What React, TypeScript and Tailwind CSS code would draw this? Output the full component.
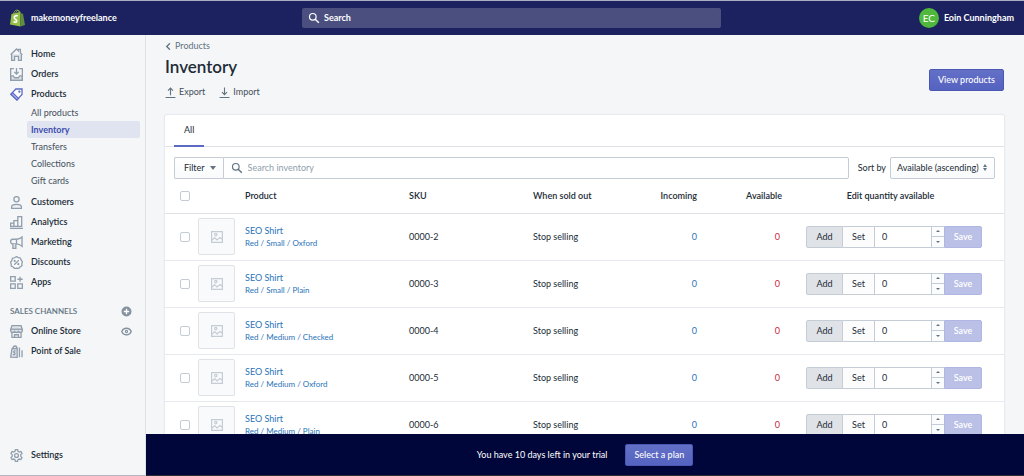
import { useState, type ReactNode } from 'react';
import clsx from 'clsx';

type IconProps = { children: ReactNode; className?: string };

function Icon({ children, className }: IconProps) {
  return (
    <svg
      viewBox="0 0 20 20"
      fill="none"
      stroke="currentColor"
      strokeWidth="2"
      aria-hidden="true"
      className={clsx('shrink-0', className)}
    >
      {children}
    </svg>
  );
}

const icons = {
  home: (
    <>
      <path d="M2.500 9.500V19H7v-6h6v6h4.500V9.500" fill="#dfe3e8" />
      <path d="M1 10.500 10 1.500l3 3V2h3v5.500l3 3" />
    </>
  ),
  orders: (
    <>
      <path d="M1 12h4l2 3h6l2-3h4v7H1z" fill="#dfe3e8" />
      <path d="M6 1H1v18h18V1h-5M10 0v9M6.500 6l3.500 3.500L13.500 6" />
    </>
  ),
  products: (
    <>
      <path d="M9 1.500h9.500V10L11 18l-9.500-8.500z" fill="#fff" />
      <path d="m1.500 9.500 9 9L13 16 4 7z" fill="#b3bcf5" />
      <circle cx="14.500" cy="5.500" r=".8" />
    </>
  ),
  customers: (
    <>
      <circle cx="10" cy="5" r="4" />
      <path d="M2.500 19v-2c0-3 2.500-4 7.500-4s7.500 1 7.500 4v2z" fill="#eef0f3" />
    </>
  ),
  analytics: (
    <>
      <path d="M1 11h5v5H1zM6 7h6v9H6zM12 1h6v15h-6z" />
      <path d="M0 19h20" />
    </>
  ),
  marketing: (
    <>
      <path d="M10 5H4C2 5 1 6.500 1 8.500S2 12 4 12h6c3.500 0 6 1.500 8.500 4V1.500C16 4 13.500 5 10 5zM10 5v7" />
      <path d="M4.500 12v7H9v-7" fill="#dfe3e8" />
    </>
  ),
  discounts: (
    <>
      <path d="m10 1 2.700 1.500 3.200.6 1.200 3 1.900 2.600-.7 3.100.1 3.200-2.800 1.700-2.100 2.300-3.200-.3-3.200.6-2.300-2.300-2.800-1.500-.2-3.200L1 9.300l1.900-2.600.9-3.100 3.100-.9z" fill="#f9fafb" />
      <path d="m6.500 13.500 7-7" />
      <circle cx="7.200" cy="7.500" r=".7" />
      <circle cx="12.800" cy="12.500" r=".7" />
    </>
  ),
  apps: (
    <>
      <path d="M1 1h7v7H1zM1 12h7v7H1zM12 12h7v7h-7z" />
      <path d="M15.500 1v8M11.500 5h8" />
    </>
  ),
  store: (
    <>
      <path d="M3 11v8h14v-8M7 19v-4h6v4" />
      <path d="M3 1h14l2 6v2c0 1.500-1 2.500-3 2.500S13 10.500 13 9c0 1.500-1 2.500-3 2.500S7 10.500 7 9c0 1.500-1 2.500-3 2.500S1 10.500 1 9V7z" fill="#dfe3e8" />
      <path d="M1 6.500h18" />
    </>
  ),
  pos: (
    <>
      <path d="M1 18.500 3 6l8-1v14z" fill="#dfe3e8" />
      <path d="M4 6c.5-3 2-4.500 4-4.500S10.500 3 10.500 5M8.500 9.500c-2-1-3.500.5-2.500 1.700s2.500 1.300 1.500 3c-.7 1-2 .8-3 .2M14.500 4v15M18.500 8v11" />
    </>
  ),
  settings: (
    <>
      <path d="m8.300 1-.6 2.500-2 1.100-2.500-.8-1.700 3L3.400 8.700v2.600l-1.900 1.900 1.700 3 2.500-.8 2 1.100.6 2.500h3.400l.6-2.500 2-1.100 2.500.8 1.700-3-1.900-1.900V8.700l1.900-1.900-1.700-3-2.500.8-2-1.100-.6-2.500z" />
      <circle cx="10" cy="10" r="3" />
    </>
  ),
};

const mainNav = [
  { label: 'Customers', icon: icons.customers },
  { label: 'Analytics', icon: icons.analytics },
  { label: 'Marketing', icon: icons.marketing },
  { label: 'Discounts', icon: icons.discounts },
  { label: 'Apps', icon: icons.apps },
];

const productNav = ['All products', 'Inventory', 'Transfers', 'Collections', 'Gift cards'];

const items = [
  { sku: '0000-2', variant: 'Red / Small / Oxford' },
  { sku: '0000-3', variant: 'Red / Small / Plain' },
  { sku: '0000-4', variant: 'Red / Medium / Checked' },
  { sku: '0000-5', variant: 'Red / Medium / Oxford' },
  { sku: '0000-6', variant: 'Red / Medium / Plain' },
];

function NavItem({ label, icon, active }: { label: string; icon: ReactNode; active?: boolean }) {
  return (
    <a href="#" className="flex h-5 items-center gap-2 pl-[10px] font-semibold text-[#212b36]">
      <Icon className={clsx('size-[13px]', active ? 'text-[#5c6ac4]' : 'text-[#919eab]')}>{icon}</Icon>
      {label}
    </a>
  );
}

function SearchIcon({ className }: { className?: string }) {
  return (
    <Icon className={clsx('size-3', className)}>
      <circle cx="8" cy="8" r="5.500" />
      <path d="m12 12 6 6" strokeWidth="2.500" />
    </Icon>
  );
}

function Header() {
  return (
    <header className="flex h-[35px] shrink-0 items-center border-t border-[#a9b0c4] bg-[#1c2260] font-bold text-white">
      <div className="flex w-[302px] items-center gap-[6px] pl-[10px]">
        <svg viewBox="0 0 30 34" className="h-[18px] w-[15px]" aria-hidden="true">
          <path d="M3 9 20 5l1 29L0 30z" fill="#95bf47" />
          <path d="m20 5 3 3 3 .5L30 31l-9 3z" fill="#5e8e3e" />
          <path d="M7 9c1-5 4-8 7-8s4 3 4 6M11 8c1-4 3-6 5-6 3 0 4 2 4 5" fill="none" stroke="#95bf47" strokeWidth="1.500" />
          <path d="M15.500 13c-4-2-7.500.5-7 3.500.5 3.500 5 3.500 5 6.500 0 3-3.500 3-6.500 1" fill="none" stroke="#fff" strokeWidth="3.200" />
        </svg>
        <span>makemoneyfreelance</span>
      </div>
      <label className="flex h-5 flex-1 items-center gap-1 rounded-[2px] bg-[#4a4f80] px-[6px]">
        <SearchIcon />
        <input
          type="search"
          aria-label="Search"
          placeholder="Search"
          className="w-full bg-transparent outline-none placeholder:text-white"
        />
      </label>
      <div className="flex w-[303px] items-center justify-end gap-[5px] pr-[10px]">
        <span className="flex size-5 items-center justify-center rounded-full bg-[#50b83c] text-[10px] font-normal">EC</span>
        <span>Eoin Cunningham</span>
      </div>
    </header>
  );
}

function Sidebar() {
  return (
    <nav className="flex w-[146px] shrink-0 flex-col border-r border-b border-r-[#dfe3e8] border-b-[#b5b3bd] pt-[9px] pb-[10px]">
      <NavItem label="Home" icon={icons.home} />
      <NavItem label="Orders" icon={icons.orders} />
      <NavItem label="Products" icon={icons.products} active />
      <ul className="mb-[3px] pr-[5px] pl-[27px]">
        {productNav.map((label) => (
          <li key={label}>
            <a
              href="#"
              className={clsx(
                'flex h-[17px] items-center rounded-[2px] pl-1',
                label === 'Inventory' ? 'bg-[#e0e4f1] font-bold text-[#3f4eae]' : 'text-[#454f5b]',
              )}
            >
              {label}
            </a>
          </li>
        ))}
      </ul>
      {mainNav.map((item) => (
        <NavItem key={item.label} label={item.label} icon={item.icon} />
      ))}
      <div className="mt-[9px] flex h-5 items-center justify-between pr-[13px] pl-[10px] text-[#637381]">
        <h2 className="text-[8px] font-semibold">SALES CHANNELS</h2>
        <button type="button" aria-label="Add sales channel">
          <svg viewBox="0 0 20 20" className="size-[11px]" aria-hidden="true">
            <circle cx="10" cy="10" r="9" fill="#84919e" />
            <path d="M10 5v10M5 10h10" stroke="#fff" strokeWidth="2.500" />
          </svg>
        </button>
      </div>
      <div className="flex items-center justify-between pr-[13px]">
        <NavItem label="Online Store" icon={icons.store} />
        <button type="button" aria-label="View your online store" className="text-[#84919e]">
          <Icon className="size-[11px]">
            <path d="M1.500 10C3 6 6 4 10 4s7 2 8.500 6c-1.500 4-4.500 6-8.500 6s-7-2-8.500-6z" strokeWidth="2.500" />
            <circle cx="10" cy="10" r="2" />
          </Icon>
        </button>
      </div>
      <NavItem label="Point of Sale" icon={icons.pos} />
      <div className="mt-auto">
        <NavItem label="Settings" icon={icons.settings} />
      </div>
    </nav>
  );
}

function Checkbox({ label }: { label: string }) {
  return (
    <input
      type="checkbox"
      aria-label={label}
      className="block size-[10px] appearance-none rounded-[2px] border border-[#c4cdd5] bg-white checked:bg-[#5c6ac4]"
    />
  );
}

function QuantityEditor({ sku }: { sku: string }) {
  const [mode, setMode] = useState('Add');
  const [quantity, setQuantity] = useState(0);

  return (
    <div className="flex h-[22px] w-[176px]">
      {['Add', 'Set'].map((name) => (
        <button
          key={name}
          type="button"
          aria-pressed={mode === name}
          onClick={() => setMode(name)}
          className={clsx(
            'w-8 border border-[#c4cdd5] first:w-[37px] first:rounded-l-[2px]',
            mode === name ? 'bg-[#dfe3e8]' : 'border-l-0 bg-[#fcfcfd]',
          )}
        >
          {name}
        </button>
      ))}
      <input
        type="number"
        aria-label={`Quantity for ${sku}`}
        value={quantity}
        onChange={(e) => setQuantity(Number(e.target.value))}
        className="w-[57px] appearance-none border-y border-r border-[#c4cdd5] bg-white px-[7px] [appearance:textfield] [&::-webkit-inner-spin-button]:appearance-none"
      />
      <div className="flex w-3 flex-col border-y border-[#c4cdd5] bg-[#fbfcfd] text-[#637381]">
        <button
          type="button"
          aria-label="Increase"
          onClick={() => setQuantity(quantity + 1)}
          className="flex flex-1 items-center justify-center border-b border-[#c4cdd5]"
        >
          <svg viewBox="0 0 4 2" className="h-[2px] w-1" aria-hidden="true"><path d="M0 2h4L2 0z" fill="currentColor" /></svg>
        </button>
        <button
          type="button"
          aria-label="Decrease"
          onClick={() => setQuantity(quantity - 1)}
          className="flex flex-1 items-center justify-center"
        >
          <svg viewBox="0 0 4 2" className="h-[2px] w-1" aria-hidden="true"><path d="M0 0h4L2 2z" fill="currentColor" /></svg>
        </button>
      </div>
      <button type="button" disabled className="flex-1 rounded-r-[2px] border border-[#b0b6e2] bg-[#bac0e6] font-semibold text-white">
        Save
      </button>
    </div>
  );
}

function InventoryTable() {
  return (
    <table className="w-full table-fixed text-left">
      <colgroup>
        <col className="w-[33px]" />
        <col className="w-[47px]" />
        <col />
        <col className="w-[124px]" />
        <col className="w-[84px]" />
        <col className="w-[80px]" />
        <col className="w-[85px]" />
        <col className="w-[222px]" />
      </colgroup>
      <thead>
        <tr className="h-[34px] border-b border-[#dfe3e8] text-[#212b36] [&>th]:font-semibold">
          <th className="pl-[15px]"><Checkbox label="Select all" /></th>
          <th aria-label="Image" />
          <th>Product</th>
          <th>SKU</th>
          <th>When sold out</th>
          <th className="text-right">Incoming</th>
          <th className="text-right">Available</th>
          <th className="pr-[5px] text-center">Edit quantity available</th>
        </tr>
      </thead>
      <tbody>
        {items.map((item) => (
          <tr key={item.sku} className="h-[47px] border-b border-[#e6eaee]">
            <td className="pl-[15px]"><Checkbox label={`Select ${item.sku}`} /></td>
            <td>
              <div className="flex size-[37px] items-center justify-center rounded-[2px] border border-[#dfe3e8] bg-[#f9fafb] text-[#c4cdd5]">
                <Icon className="size-3">
                  <path d="M1 1h18v18H1zM1 16l5-5 4 4 5-4 4 3" />
                  <circle cx="8" cy="6" r="2" />
                </Icon>
              </div>
            </td>
            <td className="text-[#2a74b8]">
              <a href="#" className="block leading-[13px]">SEO Shirt</a>
              <a href="#" className="block text-[8px] leading-[13px]">{item.variant}</a>
            </td>
            <td>{item.sku}</td>
            <td>Stop selling</td>
            <td className="text-right"><a href="#" className="text-[#2a74b8]">0</a></td>
            <td className="pr-[2px] text-right text-[#c8283c]">0</td>
            <td className="pl-6"><QuantityEditor sku={item.sku} /></td>
          </tr>
        ))}
      </tbody>
    </table>
  );
}

function PageHeader() {
  return (
    <div className="flex items-end justify-between">
      <div>
        <a href="#" className="flex items-center gap-[3px] leading-3 text-[#637381]">
          <Icon className="size-[7px]"><path d="m14 1-9 9 9 9" strokeWidth="4" /></Icon>
          Products
        </a>
        <h1 className="mt-[3px] text-[17px] leading-6 font-semibold text-[#212b36]">Inventory</h1>
        <div className="mt-[7px] flex gap-[14px] leading-3 text-[#454f5b]">
          <button type="button" className="flex items-center gap-[3px]">
            <Icon className="size-[11px] text-[#637381]"><path d="M10 15V2M5.500 6.500 10 2l4.500 4.500M1 19h18" /></Icon>
            Export
          </button>
          <button type="button" className="flex items-center gap-[3px]">
            <Icon className="size-[11px] text-[#637381]"><path d="M10 1v13M5.500 9.500 10 14l4.500-4.500M1 19h18" /></Icon>
            Import
          </button>
        </div>
      </div>
      <a href="#" className="mb-[7px] flex h-[22px] items-center rounded-[2px] border border-[#4a58b4] bg-linear-to-b from-[#6370c6] to-[#5563c1] px-2 font-medium text-white">
        View products
      </a>
    </div>
  );
}

function InventoryCard() {
  return (
    <section className="mt-[17px] rounded-[2px] bg-white shadow-[0_0_1px_1px_#e6eaee]">
      <div className="flex border-b border-[#dfe3e8] px-[9px]">
        <button type="button" className="-mb-px h-8 border-b-2 border-[#5c6ac4] px-[10px]">All</button>
      </div>
      <div className="flex px-[9px] pt-[10px]">
        <button
          type="button"
          className="flex h-[22px] items-center gap-[5px] rounded-l-[2px] border border-r-0 border-[#c4cdd5] bg-linear-to-b from-white to-[#f9fafb] pr-[7px] pl-[9px]"
        >
          Filter
          <svg viewBox="0 0 6 4" className="h-1 w-[6px] text-[#637381]" aria-hidden="true"><path d="M0 0h6L3 4z" fill="currentColor" /></svg>
        </button>
        <label className="flex h-[22px] flex-1 items-center gap-[5px] rounded-r-[2px] border border-[#c4cdd5] px-[7px]">
          <SearchIcon className="text-[#637381]" />
          <input
            type="search"
            aria-label="Search inventory"
            placeholder="Search inventory"
            className="w-full outline-none placeholder:text-[#919eab]"
          />
        </label>
        <label htmlFor="sort" className="self-center pr-1 pl-[9px]">Sort by</label>
        <div className="relative">
          <select
            id="sort"
            className="h-[22px] w-[105px] appearance-none rounded-[2px] border border-[#c4cdd5] bg-linear-to-b from-white to-[#f9fafb] pl-[6px]"
          >
            <option>Available (ascending)</option>
            <option>Available (descending)</option>
          </select>
          <svg viewBox="0 0 4 7" className="pointer-events-none absolute top-[7px] right-2 h-[7px] w-1 text-[#637381]" aria-hidden="true">
            <path d="M0 3h4L2 0zM0 4h4L2 7z" fill="currentColor" />
          </svg>
        </div>
      </div>
      <InventoryTable />
    </section>
  );
}

export default function App() {
  return (
    <div className="flex h-screen flex-col overflow-hidden bg-[#f4f6f8] font-[Lato,sans-serif] text-[9px] text-[#212b36]">
      <Header />
      <div className="flex min-h-0 flex-1">
        <Sidebar />
        <div className="flex min-w-0 flex-1 flex-col">
          <main className="min-h-0 flex-1 overflow-hidden pt-[5px] pr-5 pl-[19px]">
            <PageHeader />
            <InventoryCard />
          </main>
          <footer className="flex h-[42px] shrink-0 items-center justify-center gap-[18px] border-b border-[#2b2b33] bg-[#00063a] text-white">
            <p>You have 10 days left in your trial</p>
            <a href="#" className="flex h-[22px] items-center rounded-[2px] border border-[#4a58b4] bg-linear-to-b from-[#6370c6] to-[#5563c1] px-2 font-medium">
              Select a plan
            </a>
          </footer>
        </div>
      </div>
    </div>
  );
}
